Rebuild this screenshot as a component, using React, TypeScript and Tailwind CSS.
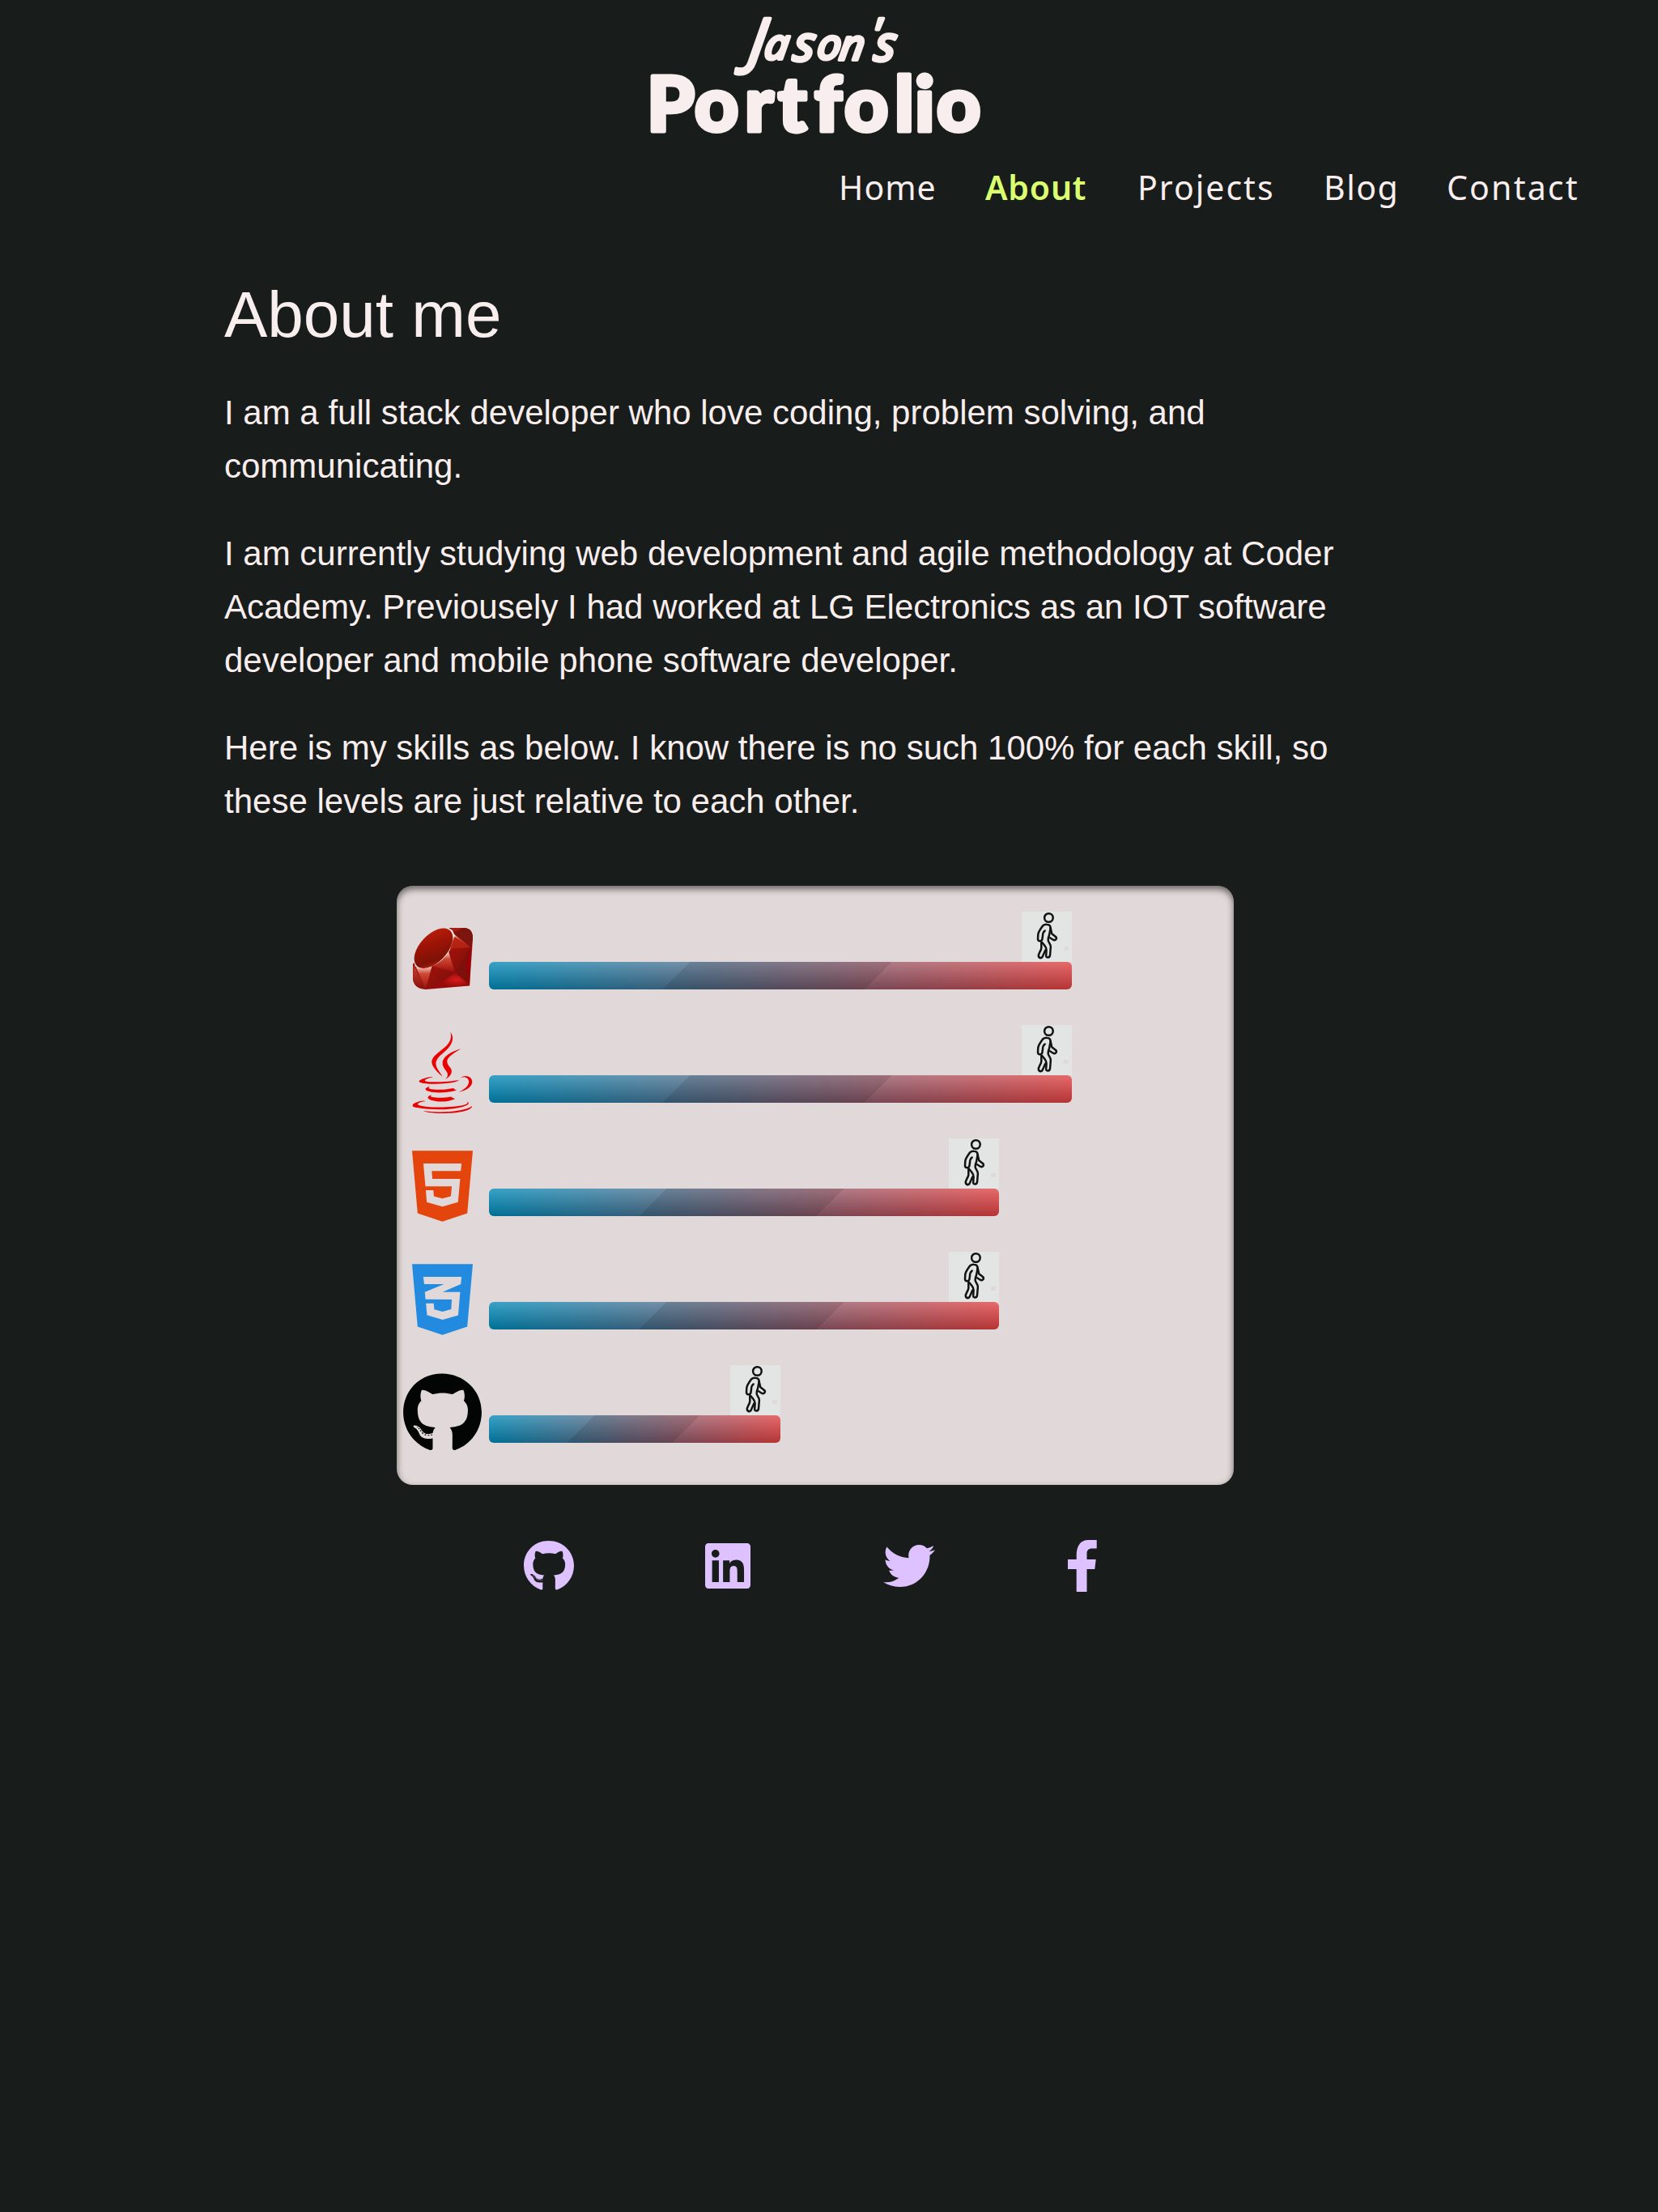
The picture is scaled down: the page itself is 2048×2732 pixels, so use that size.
import React from "react";
import { FaGithub, FaLinkedin, FaTwitter, FaJava, FaHtml5, FaCss3Alt } from "react-icons/fa";

function Logo() {
  return (
    <svg className="mx-auto block h-[180px] w-[450px] overflow-visible" viewBox="780 0 450 180" role="img" aria-label="Jason's Portfolio">
      <g fill="#f9eeee" stroke="#f9eeee" strokeLinejoin="round">
        <text
          x="933 953 989 1018 1046 1082 1089"
          y="77 73 75 73 74 60 75"
          fontFamily="'Noto Sans', sans-serif"
          fontStyle="italic"
          fontWeight="400"
          strokeWidth="4.2"
          fontSize="52"
          transform="skewX(-8)"
        >
          <tspan fontSize="76">J</tspan>a<tspan fontSize="60">s</tspan>on'<tspan fontSize="60">s</tspan>
        </text>
        <text
          x="799 858 920 961 1006 1043 1105 1130 1157"
          y="162"
          fontFamily="Lato, sans-serif"
          fontWeight="900"
          strokeWidth="5"
          fontSize="94"
        >
          Portfolio
        </text>
      </g>
    </svg>
  );
}

const links = [
  { label: "Home", cls: "w-[181px] tracking-[1px]" },
  { label: "About", cls: "w-[188px] font-semibold text-[#dcff70] tracking-[0.8px]" },
  { label: "Projects", cls: "w-[230px] tracking-[2px]" },
  { label: "Blog", cls: "w-[152px] tracking-[1.5px]" },
  { label: "Contact", cls: "w-[180px] tracking-[2.2px]" },
];

function Ruby() {
  return (
    <svg className="mt-[11px] h-[76px] w-[74px]" viewBox="0 0 74 76">
      <defs>
        <linearGradient id="crown" x1="0" y1="1" x2="1" y2="0">
          <stop offset="0" stopColor="#e5c0b8" />
          <stop offset="0.16" stopColor="#a01a0c" />
          <stop offset="0.25" stopColor="#7e1206" />
          <stop offset="0.6" stopColor="#9c1406" />
          <stop offset="1" stopColor="#c8200a" />
        </linearGradient>
        <linearGradient id="shine" x1="0" y1="0" x2="0" y2="1">
          <stop offset="0" stopColor="#f4e4e0" />
          <stop offset="0.35" stopColor="#cf4a34" />
          <stop offset="1" stopColor="#9c0c0a" />
        </linearGradient>
        <linearGradient id="edge" x1="0" y1="0" x2="0" y2="1">
          <stop offset="0" stopColor="#c8402c" />
          <stop offset="1" stopColor="#8a100c" />
        </linearGradient>
        <linearGradient id="dark" x1="0" y1="0" x2="1" y2="1">
          <stop offset="0" stopColor="#a4120a" />
          <stop offset="1" stopColor="#74100a" />
        </linearGradient>
        <radialGradient id="base" cx="0.6" cy="0.5" r="0.5">
          <stop offset="0" stopColor="#d81c1c" />
          <stop offset="1" stopColor="#98090a" />
        </radialGradient>
      </defs>
      <path d="M45 0H64Q74 1 74 13L70 71.500L16 76Q0 75 0 61V45L20 20Z" fill="#960b0b" />
      <path d="M1 46L16 75Q0 75 0 61Z" fill="url(#edge)" />
      <path d="M4 49L24 46L16 76Z" fill="url(#shine)" />
      <path d="M24 46L52 55L16 76Z" fill="url(#dark)" />
      <path d="M24 47L44 29L52 55Z" fill="url(#shine)" />
      <path d="M46 26L71 25L52 55Z" fill="url(#dark)" />
      <path d="M52 55L71 25L70 71Z" fill="#7f0f0a" />
      <path d="M71 24L70 71L66 45Z" fill="#9c0008" />
      <path d="M52 55L70 71L30 73Z" fill="url(#base)" />
      <path d="M46 26L50 7L72 24Z" fill="url(#shine)" />
      <path d="M46 0H64Q74 1 74 13L72 24L49 6Z" fill="#7c150e" />
      <path d="M46 0H62L52 5Z" fill="#a81c14" />
      <path d="M44 0L49 3L52 10L46 27Q38 42 22 48Q10 52 3 48L1 40Z" fill="#f1e3e0" />
      <path d="M51 11L71 24L46 26Z" fill="#b5220f" opacity="0.9" />
      <ellipse cx="25.500" cy="25.200" rx="30" ry="16.800" transform="rotate(-47 25.500 25.200)" fill="url(#crown)" />
    </svg>
  );
}

function Walker() {
  return (
    <svg className="block size-[62px] bg-[#e2e5e4]" viewBox="0 0 62 62">
      <g fill="none" stroke="#101312" strokeWidth="2.500" strokeLinecap="round" strokeLinejoin="round">
        <circle cx="33.400" cy="7.500" r="5.300" />
        <path d="M28.700 23.500C26.500 25 26 27 26 30L25.300 34.500Q24.500 36.500 22 36.300Q20 36 20 33.500L20.300 28C21 24 24 20.500 26 17.500Q28 15.600 31 15.800Q35.500 16 35.600 20L37.300 27.300L42 31Q43.500 32.500 42.500 34Q41 36 38.500 34.500L35 32.300" />
        <path d="M35.700 20L34 29Q32 34 33 36.500L35.600 41.500Q36.300 44 35.500 48L35 54Q34.500 56.700 32 56.500Q30 56.500 30.200 54L30.600 47.500Q30.500 44.500 28.500 42L25 37.800" />
        <path d="M24.300 38L24.300 45Q24 47 22.500 49.500L20.800 53.500Q20.500 56.500 23 57.200Q25.500 57.200 26.200 54.500L29.300 47.500" />
      </g>
      <rect x="52" y="43" width="6" height="5" fill="#e1d8d9" />
    </svg>
  );
}

const skills = [
  { name: "Ruby", icon: <Ruby />, width: 720 },
  { name: "Java", icon: <FaJava className="h-[100px] w-[75px] text-[#ea0202]" />, width: 720 },
  { name: "HTML5", icon: <FaHtml5 className="h-[100px] w-[75px] text-[#e4450d]" />, width: 630 },
  { name: "CSS3", icon: <FaCss3Alt className="h-[100px] w-[75px] text-[#228be0]" />, width: 630 },
  { name: "GitHub", icon: <FaGithub className="h-[100px] w-[97px] text-[#030504]" />, width: 360 },
];

export default function App() {
  return (
    <div className="min-h-[2732px] w-[2048px] bg-[#181c1b] font-['Liberation_Sans',Arial,sans-serif] text-[#f9eeee]">
      <header className="h-[320px]">
        <div className="pr-[38px]">
          <Logo />
        </div>
        <nav className="flex pl-[1036px] pt-[23px] font-['Noto_Sans',sans-serif] text-[41px] leading-[56px]">
          {links.map((l) => (
            <a key={l.label} className={`block shrink-0 ${l.cls}`}>{l.label}</a>
          ))}
        </nav>
      </header>
      <main>
        <section className="box-content h-[774px] w-[1400px] pl-[277px]">
          <h1 className="pt-[23px] text-[80px] leading-[92px]">About me</h1>
          <div className="mt-[42px] flex flex-col gap-[42px] whitespace-nowrap text-[42px] leading-[66px]">
            <p>I am a full stack developer who love coding, problem solving, and<br />communicating.</p>
            <p>I am currently studying web development and agile methodology at Coder<br />Academy. Previousely I had worked at LG Electronics as an IOT software<br />developer and mobile phone software developer.</p>
            <p>Here is my skills as below. I know there is no such 100% for each skill, so<br />these levels are just relative to each other.</p>
          </div>
        </section>
        <section className="ml-[490px] h-[740px] w-[1034px] rounded-[20px] bg-[#e1d8d9] pt-[32px] shadow-[inset_0_4px_9px_rgba(0,0,0,0.55)]">
          {skills.map((s) => (
            <div key={s.name} className="flex h-[140px]">
              <div className="flex w-[113.500px] justify-center pt-[9px]">{s.icon}</div>
              <div className="ml-[0.500px] flex flex-col items-end self-start" style={{ width: s.width }}>
                <Walker />
                <div className="h-[34px] w-full rounded-[6px] bg-[linear-gradient(135deg,transparent_33%,rgba(0,0,0,0.1)_33%,rgba(0,0,0,0.1)_66%,transparent_66%),linear-gradient(to_bottom,rgba(255,255,255,0.22),rgba(0,0,0,0.19)),linear-gradient(to_right,#0089b8,#e04040)]" />
              </div>
            </div>
          ))}
        </section>
      </main>
      <footer className="flex pl-[647px] pt-[68px] text-[#dec2ff]">
        <FaGithub className="mr-[162px] h-[64px] w-[62px]" />
        <FaLinkedin className="mr-[164px] h-[64px] w-[56px]" />
        <FaTwitter className="mr-[164px] h-[64px] w-[64px]" />
        <svg className="h-[64px] w-[36px]" viewBox="0 0 36 64" fill="currentColor">
          <path d="M10.700 64V36H0V24H10.700V19C10.700 8 15 0 25.500 0H35.700V10.500H30.500C25 10.500 23.500 13 23.500 17V24H34.700L33.300 36H23.500V64Z" />
        </svg>
      </footer>
    </div>
  );
}
